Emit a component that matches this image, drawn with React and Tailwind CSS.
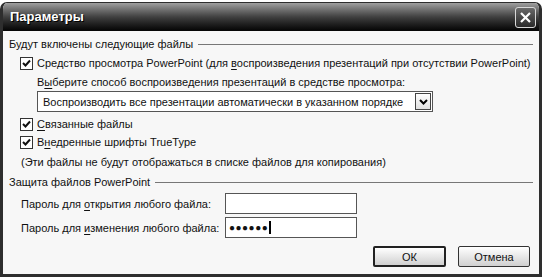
import React from 'react';

const font = { fontFamily: '"Liberation Sans", Arial, sans-serif' };

function U({ children }) {
    return <span className="underline underline-offset-2">{children}</span>;
}

function Check() {
    return (
        <span className="flex h-[13px] w-[13px] shrink-0 items-center justify-center border border-[#333] bg-white">
            <svg width="9" height="9" viewBox="0 0 9 9">
                <path d="M1 4 L3.5 6.5 L8 1.5" fill="none" stroke="#111" strokeWidth="2" />
            </svg>
        </span>
    );
}

function Group({ title, children }) {
    return (
        <div>
            <div className="flex h-[14px] items-center gap-[5px]">
                <span>{title}</span>
                <span className="h-px flex-1 bg-[#777]"></span>
            </div>
            {children}
        </div>
    );
}

export default function App() {
    return (
        <div className="h-[278px] w-[544px] whitespace-nowrap bg-white pt-[2px] text-[11px] leading-[14px] text-[#111]" style={font}>
            <div className="flex h-[275px] w-[542px] flex-col overflow-hidden rounded-t-[7px] border-[3px] border-t-[1px] border-[#2e2e2e] bg-[#f7f7f7]">
                {/* title bar */}
                <div className="flex h-[28px] shrink-0 items-center justify-between bg-gradient-to-b from-[#a0a0a0] via-[#404040] to-[#050505] pl-[7px] pr-[3px]">
                    <span className="text-[13px] font-bold text-white [text-shadow:1px_1px_0_#000]">Параметры</span>
                    <span className="flex h-[21px] w-[21px] items-center justify-center rounded-[3px] border border-[#d8d8d8] bg-gradient-to-b from-[#6a6a6a] to-[#2a2a2a]">
                        <svg width="11" height="11" viewBox="0 0 11 11">
                            <path d="M1 1 L10 10 M10 1 L1 10" stroke="#fff" strokeWidth="2.2" />
                        </svg>
                    </span>
                </div>

                {/* body */}
                <div className="flex flex-1 flex-col px-[6px] pt-[6px]">
                    <Group title="Будут включены следующие файлы">
                        <div className="mt-[5px] flex items-center gap-[4px] pl-[11px]">
                            <Check />
                            <span>Средство просмотра PowerPoint (для <U>в</U>оспроизведения презентаций при отсутствии PowerPoint)</span>
                        </div>
                        <div className="mt-[5px] pl-[28px]">
                            В<U>ы</U>берите способ воспроизведения презентаций в средстве просмотра:
                        </div>
                        <div className="ml-[28px] mt-[2px] flex h-[21px] w-[396px] items-center justify-between border border-[#555] bg-white pl-[5px] pr-[1px]">
                            <span>Воспроизводить все презентации автоматически в указанном порядке</span>
                            <span className="flex h-[17px] w-[16px] items-center justify-center border border-[#444] bg-gradient-to-b from-white to-[#e0e0e0]">
                                <svg width="9" height="6" viewBox="0 0 9 6">
                                    <path d="M1 1 L4.5 4.5 L8 1" fill="none" stroke="#000" strokeWidth="2" />
                                </svg>
                            </span>
                        </div>
                        <div className="mt-[5px] flex items-center gap-[4px] pl-[11px]">
                            <Check />
                            <span><U>С</U>вязанные файлы</span>
                        </div>
                        <div className="mt-[4px] flex items-center gap-[4px] pl-[11px]">
                            <Check />
                            <span>В<U>н</U>едренные шрифты TrueType</span>
                        </div>
                        <div className="mt-[6px] pl-[12px]">(Эти файлы не будут отображаться в списке файлов для копирования)</div>
                    </Group>

                    <div className="mt-[6px]">
                        <Group title="Защита файлов PowerPoint">
                            <div className="mt-[4px] flex items-center pl-[12px]">
                                <span className="w-[204px]">Пароль для <U>о</U>ткрытия любого файла:</span>
                                <span className="h-[21px] w-[132px] border border-[#555] bg-white"></span>
                            </div>
                            <div className="mt-[3px] flex items-center pl-[12px]">
                                <span className="w-[204px]">Пароль для <U>и</U>зменения любого файла:</span>
                                <span className="flex h-[21px] w-[132px] items-center border border-[#555] bg-white pl-[3px]">
                                    <span className="text-[10px] tracking-[0.5px]">●●●●●●</span>
                                    <span className="ml-[1px] h-[13px] w-[2px] bg-black"></span>
                                </span>
                            </div>
                        </Group>
                    </div>

                    <div className="mt-[8px] flex justify-end gap-[12px] pr-[3px]">
                        <button className="h-[21px] w-[73px] rounded-[2px] border-2 border-[#222] bg-gradient-to-b from-white to-[#d0d0d0]">ОК</button>
                        <button className="h-[21px] w-[72px] rounded-[2px] border border-[#333] bg-gradient-to-b from-white to-[#d0d0d0]">Отмена</button>
                    </div>
                </div>
            </div>
        </div>
    );
}
